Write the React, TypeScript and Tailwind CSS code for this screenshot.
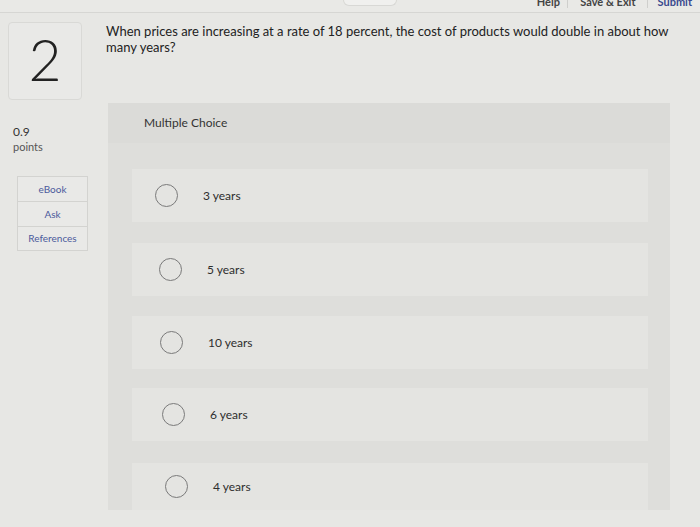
import React from "react";

const options = [
  { label: "3 years", mt: "mt-[26px]", pl: "pl-[23px]", h: "h-[53px]" },
  { label: "5 years", mt: "mt-[21px]", pl: "pl-[27px]", h: "h-[53px]" },
  { label: "10 years", mt: "mt-[20px]", pl: "pl-[28px]", h: "h-[53px]" },
  { label: "6 years", mt: "mt-[19px]", pl: "pl-[30px]", h: "h-[53px]" },
  { label: "4 years", mt: "mt-[22px]", pl: "pl-[33px]", h: "h-[47px]" },
];

export default function App() {
  return (
    <div
      className="w-[700px] h-[527px] overflow-hidden bg-[#e7e7e4] text-[#2b2b2b] relative"
      style={{ fontFamily: "Lato, 'Open Sans', sans-serif" }}
    >
      {/* top bar */}
      <div className="h-[13px] border-b border-[#d6d6d3] flex items-start bg-[#e9e9e6]">
        <div className="ml-[343px] w-[54px] h-[6px] rounded-b-[6px] bg-[#f0f0ee] border border-t-0 border-[#d8d8d5]" />
        <div className="ml-auto flex items-start -mt-[4px] text-[11px] font-bold leading-[12px]">
          <span className="w-[32px] text-center text-[#444]">Help</span>
          <span className="w-px h-[12px] bg-[#cfcfcc] mx-[3px]" />
          <span className="px-[9px] text-[#444]">Save &amp; Exit</span>
          <span className="w-px h-[12px] bg-[#cfcfcc] mx-[2px]" />
          <span className="pl-[8px] pr-[8px] text-[#3b4a8e]">Submit</span>
        </div>
      </div>

      <div className="flex">
        {/* left column */}
        <div className="w-[100px] shrink-0">
          <div className="ml-[8px] mt-[9px] w-[74px] h-[78px] rounded-[4px] border border-[#d9d9d6] bg-[#e9e9e7] flex items-center justify-center">
            <span className="text-[57px] font-light leading-none text-[#222] -mt-[4px]">2</span>
          </div>
          <div className="ml-[13px] mt-[24px] text-[12px] leading-[15px] text-[#333]">0.9</div>
          <div className="ml-[13px] text-[11px] leading-[15px] text-[#555]">points</div>
          <div className="ml-[17px] mt-[22px] w-[71px] border border-[#d3d3d0] bg-[#e9e9e7] text-[10px] text-[#4b5a9c] text-center">
            <div className="h-[25px] flex items-center justify-center border-b border-[#d3d3d0]">eBook</div>
            <div className="h-[25px] flex items-center justify-center border-b border-[#d3d3d0]">Ask</div>
            <div className="h-[23px] flex items-center justify-center">References</div>
          </div>
        </div>

        {/* right column */}
        <div className="flex-1">
          <p className="ml-[6px] mt-[10px] text-[13px] leading-[16px] text-[#222] whitespace-nowrap">
            When prices are increasing at a rate of 18 percent, the cost of products would double in about how
            <br />
            many years?
          </p>
          <div className="ml-[8px] mt-[48px] w-[562px] h-[407px] bg-[#dededb] flex flex-col">
            <div className="h-[40px] shrink-0 flex items-center pl-[36px] text-[12px] text-[#333] bg-[#dbdbd8]">
              Multiple Choice
            </div>
            {options.map((o) => (
              <div
                key={o.label}
                className={`${o.mt} ${o.h} ${o.pl} ml-[24px] mr-[22px] shrink-0 bg-[#e4e4e1] flex items-center`}
              >
                <span className="w-[23px] h-[23px] rounded-full border-[1.5px] border-[#7a7a7a] shrink-0" />
                <span className="ml-[25px] text-[12px] text-[#2e2e2e]">{o.label}</span>
              </div>
            ))}
          </div>
        </div>
      </div>
    </div>
  );
}
